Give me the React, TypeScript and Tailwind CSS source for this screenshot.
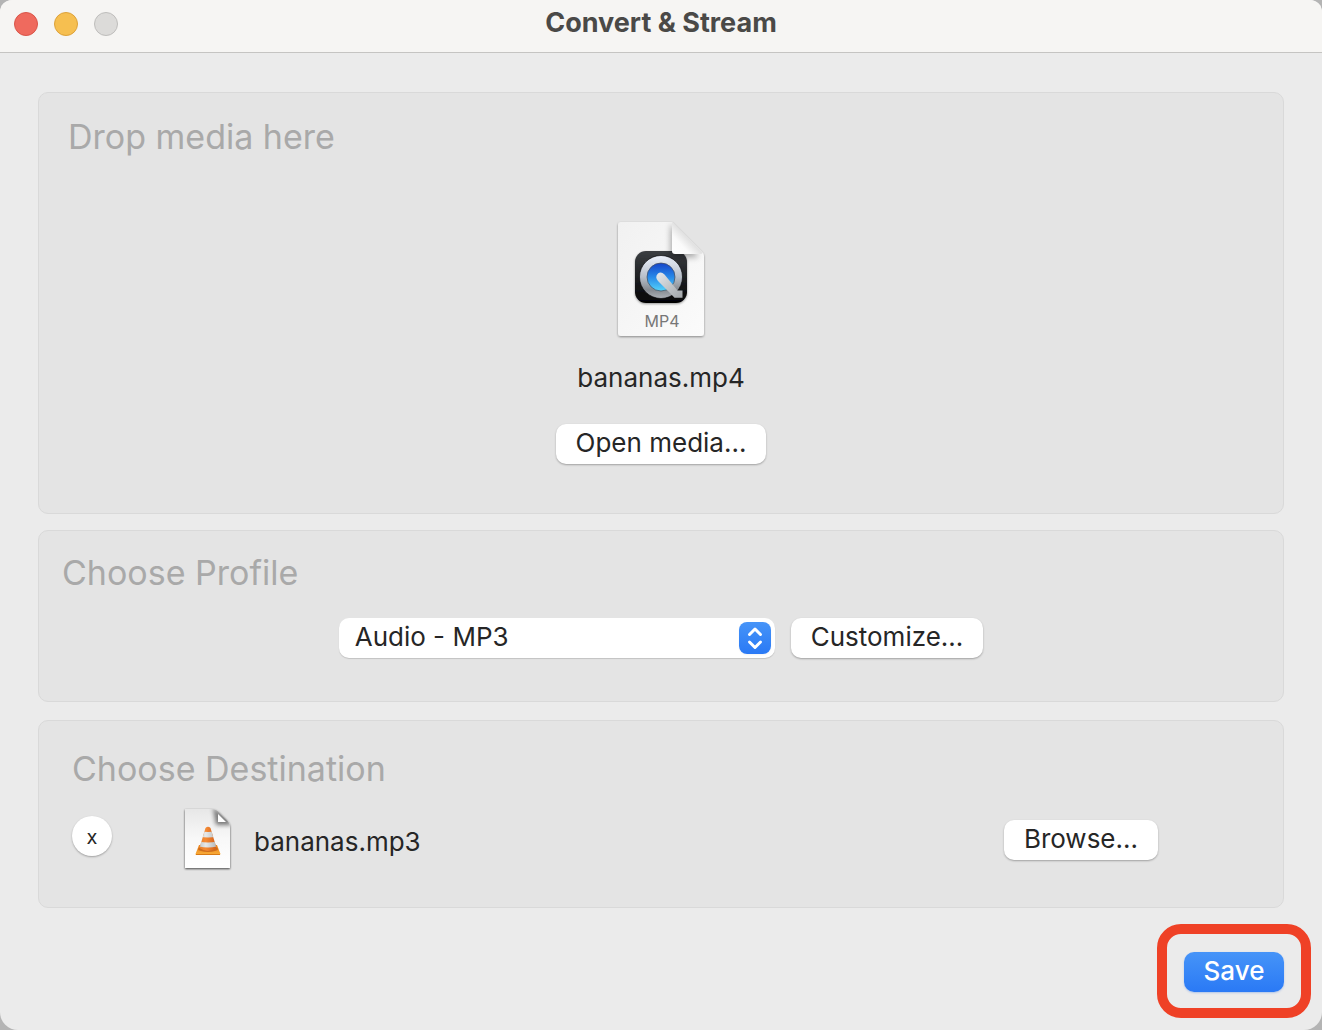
import type { ButtonHTMLAttributes, ReactNode } from "react";

function PushButton({ className = "", ...props }: ButtonHTMLAttributes<HTMLButtonElement>) {
  return (
    <button
      type="button"
      className={`h-10 shrink-0 rounded-[10px] bg-white px-5 pb-0.5 text-[26px] leading-9 whitespace-nowrap text-[#262626] shadow-[0_1px_2px_rgba(0,0,0,0.3)] ${className}`}
      {...props}
    />
  );
}

function Panel({ className = "", children }: { className?: string; children: ReactNode }) {
  return (
    <section className={`rounded-[10px] border border-[#d9d9d9] bg-[#e4e4e4] ${className}`}>
      {children}
    </section>
  );
}

function PanelTitle({ children }: { children: ReactNode }) {
  return <h2 className="text-[34px] leading-11 text-[#a9a9a9]">{children}</h2>;
}

function Mp4FileIcon() {
  return (
    <svg width="96" height="124" viewBox="0 0 96 124" role="img" aria-label="MP4 file">
      <defs>
        <linearGradient id="mp4Page" x1="0" y1="0" x2="1" y2="1">
          <stop offset="0" stopColor="#f1f1f1" />
          <stop offset="1" stopColor="#fbfbfb" />
        </linearGradient>
        <linearGradient id="mp4Fold" x1="0" y1="1" x2="1" y2="0">
          <stop offset="0" stopColor="#ffffff" />
          <stop offset="0.3" stopColor="#fafafa" />
          <stop offset="0.5" stopColor="#e2e2e2" />
        </linearGradient>
        <linearGradient id="qtTile" x1="0" y1="0" x2="0" y2="1">
          <stop offset="0" stopColor="#3b3e42" />
          <stop offset="1" stopColor="#030304" />
        </linearGradient>
        <linearGradient id="qtRing" x1="0" y1="0" x2="0" y2="1">
          <stop offset="0" stopColor="#edf2fc" />
          <stop offset="0.5" stopColor="#b8bfc9" />
          <stop offset="0.8" stopColor="#858a90" />
          <stop offset="1" stopColor="#aeb2b6" />
        </linearGradient>
        <linearGradient id="qtBlue" x1="0" y1="0" x2="0" y2="1">
          <stop offset="0" stopColor="#1544c9" />
          <stop offset="0.5" stopColor="#2788e8" />
          <stop offset="1" stopColor="#56d4fa" />
        </linearGradient>
        <linearGradient id="qtHand" x1="0" y1="0" x2="1" y2="1">
          <stop offset="0" stopColor="#e5e9ed" />
          <stop offset="1" stopColor="#a2a6a9" />
        </linearGradient>
        <clipPath id="mp4Clip">
          <path d="M8 4H59L91 36V115Q91 118 88 118H8Q5 118 5 115V7Q5 4 8 4Z" />
        </clipPath>
        <filter id="mp4Shadow" x="-20%" y="-20%" width="140%" height="140%">
          <feDropShadow dx="0" dy="1" stdDeviation="1" floodOpacity="0.4" />
        </filter>
        <filter id="foldShadow" x="-50%" y="-50%" width="200%" height="200%">
          <feGaussianBlur stdDeviation="3" />
        </filter>
      </defs>
      <path
        d="M8 4H59L89 34Q91 36 91 38V115Q91 118 88 118H8Q5 118 5 115V7Q5 4 8 4Z"
        fill="url(#mp4Page)"
        filter="url(#mp4Shadow)"
      />
      <rect x="22" y="33" width="52" height="52" rx="11" fill="url(#qtTile)" filter="url(#mp4Shadow)" />
      <circle cx="48" cy="59" r="21.5" fill="url(#qtRing)" stroke="#08090b" strokeWidth="0.7" />
      <circle cx="48" cy="59" r="14" fill="url(#qtBlue)" stroke="#454c58" strokeWidth="0.7" />
      <path
        d="M45 55.500Q41.500 59 45 63L57.500 75.500L61.500 79.800H69.500V72.500H64.500L51.500 56.500Q48 53 45 55.500Z"
        fill="url(#qtHand)"
      />
      <g clipPath="url(#mp4Clip)">
        <path d="M58 6V39H86L60 8Z" fill="#000000" opacity="0.35" filter="url(#foldShadow)" />
      </g>
      <path d="M59 4L89 34Q90 36 87 36H62Q59 36 59 33Z" fill="url(#mp4Fold)" />
      <text
        x="49"
        y="109"
        textAnchor="middle"
        fontFamily="Inter, sans-serif"
        fontSize="16"
        fill="#777777"
      >
        MP4
      </text>
    </svg>
  );
}

function VlcFileIcon() {
  return (
    <svg width="52" height="66" viewBox="0 0 52 66" role="img" aria-label="VLC file">
      <defs>
        <linearGradient id="vlcPage" x1="0" y1="0" x2="0" y2="1">
          <stop offset="0" stopColor="#e7e7e7" />
          <stop offset="0.5" stopColor="#f8f8f8" />
          <stop offset="1" stopColor="#ffffff" />
        </linearGradient>
        <linearGradient id="coneOrange" x1="0" y1="0" x2="1" y2="0">
          <stop offset="0" stopColor="#e27b26" />
          <stop offset="0.4" stopColor="#f58b35" />
          <stop offset="1" stopColor="#c95413" />
        </linearGradient>
        <linearGradient id="coneWhite" x1="0" y1="0" x2="1" y2="0">
          <stop offset="0" stopColor="#b8bcbd" />
          <stop offset="0.4" stopColor="#e7e9e9" />
          <stop offset="1" stopColor="#a8acad" />
        </linearGradient>
        <linearGradient id="coneBase" x1="0" y1="0" x2="0" y2="1">
          <stop offset="0" stopColor="#ec821f" />
          <stop offset="1" stopColor="#f8ad38" />
        </linearGradient>
        <filter id="vlcShadow" x="-20%" y="-20%" width="140%" height="140%">
          <feDropShadow dx="0" dy="1" stdDeviation="0.8" floodOpacity="0.7" />
        </filter>
        <filter id="vlcFoldShadow" x="-50%" y="-50%" width="200%" height="200%">
          <feGaussianBlur stdDeviation="2" />
        </filter>
        <clipPath id="vlcClip">
          <path d="M3 3H29Q34 3 37 6L45 14Q48 17 48 22V62H3Z" />
        </clipPath>
        <clipPath id="coneClip">
          <path d="M23.500 22Q26 19.500 28.500 22L34.500 42Q26 48 17.500 42Z" />
        </clipPath>
      </defs>
      <path d="M3 3H29Q34 3 37 6L45 14Q48 17 48 22V62H3Z" fill="url(#vlcPage)" filter="url(#vlcShadow)" />
      <g clipPath="url(#vlcClip)">
        <path d="M31 1L34 19H50L48 15Z" fill="#000000" opacity="0.5" filter="url(#vlcFoldShadow)" />
      </g>
      <path d="M36 8L44 16H36Z" fill="#ffffff" />
      <path d="M17 39H35L38.500 48Q38 49 37 49H15Q13 49 13.500 48Z" fill="url(#coneBase)" />
      <path d="M14 48.500H38" stroke="#d87915" strokeWidth="1" />
      <ellipse cx="26" cy="43" rx="10" ry="3" fill="#b64e12" opacity="0.6" />
      <g clipPath="url(#coneClip)">
        <rect x="15" y="19" width="22" height="28" fill="url(#coneOrange)" />
        <path d="M15 25Q26 27 37 25V30Q26 33 15 30Z" fill="url(#coneWhite)" />
        <path d="M15 35Q26 38 37 35V40Q26 43 15 40Z" fill="url(#coneWhite)" />
      </g>
    </svg>
  );
}

export default function App() {
  return (
    <div className="min-h-screen bg-[#b4b4b4] font-['Inter',sans-serif] text-[#262626]">
      <div className="flex min-h-screen flex-col overflow-hidden rounded-t-[12px] rounded-b-[18px] bg-[#ebebeb]">
        <header className="grid h-[53px] grid-cols-[1fr_auto_1fr] items-center border-b border-[#c5c4c2] bg-[#f6f5f3] px-3.5 pb-1">
          <div className="flex gap-4">
            <button type="button" aria-label="Close" className="size-6 rounded-full border border-[#d95549] bg-[#ef6a5e]" />
            <button type="button" aria-label="Minimize" className="size-6 rounded-full border border-[#dca13a] bg-[#f6bf50]" />
            <button type="button" aria-label="Zoom" disabled className="size-6 rounded-full border border-[#bebdbb] bg-[#dcdbd9]" />
          </div>
          <h1 className="pb-0.5 text-[27px] leading-8 font-bold text-[#4a4947]">Convert &amp; Stream</h1>
        </header>

        <main className="flex flex-col px-[38px] pt-[39px]">
          <Panel className="px-[29px] pt-[22px] pb-[49px]">
            <PanelTitle>Drop media here</PanelTitle>
            <div className="flex flex-col items-center pt-[59px]">
              <Mp4FileIcon />
              <p className="mt-[18px] text-[26px] leading-9">bananas.mp4</p>
              <PushButton className="mt-7">Open media...</PushButton>
            </div>
          </Panel>

          <Panel className="mt-4 px-[23px] pt-5 pb-[43px]">
            <PanelTitle>Choose Profile</PanelTitle>
            <div className="mt-[23px] flex justify-center gap-4">
              <div className="relative w-[436px]">
                <select
                  aria-label="Profile"
                  className="h-10 w-full appearance-none rounded-[10px] bg-white pr-12 pb-0.5 pl-4 text-[26px] leading-9 shadow-[0_1px_1px_rgba(0,0,0,0.15)]"
                >
                  <option>Audio - MP3</option>
                </select>
                <span className="pointer-events-none absolute top-1 right-1 flex size-8 items-center justify-center rounded-lg bg-linear-to-b from-[#4694f8] to-[#2a79f5] shadow-xs">
                  <svg width="32" height="32" viewBox="0 0 32 32" fill="none" stroke="#ffffff" strokeWidth="3" strokeLinecap="round" strokeLinejoin="round">
                    <path d="M10.500 12.500L16 7L21.500 12.500M10.500 20L16 25.500L21.500 20" />
                  </svg>
                </span>
              </div>
              <PushButton>Customize...</PushButton>
            </div>
          </Panel>

          <Panel className="mt-[18px] pt-[26px] pr-[125px] pb-[35px] pl-[33px]">
            <PanelTitle>Choose Destination</PanelTitle>
            <div className="mt-[15px] flex items-center">
              <button
                type="button"
                aria-label="Remove destination"
                className="mb-1.5 size-10 rounded-full bg-white pt-0.5 text-xl shadow-[0_1px_2px_rgba(0,0,0,0.3)]"
              >
                x
              </button>
              <span className="ml-[70px]">
                <VlcFileIcon />
              </span>
              <p className="ml-5 pt-1.5 text-[26px] leading-9">bananas.mp3</p>
              <PushButton className="mt-0.5 ml-auto">Browse...</PushButton>
            </div>
          </Panel>
        </main>

        <footer className="flex justify-end pt-4 pr-[11px] pb-3">
          <div className="rounded-[24px] border-10 border-[#ef4126] px-[17px] pt-[18px] pb-4">
            <button
              type="button"
              className="block h-10 w-[100px] rounded-[10px] bg-linear-to-b from-[#4694f8] to-[#2a79f5] pb-0.5 text-[26px] leading-9 font-medium text-white shadow-[0_1px_2px_rgba(40,110,230,0.3)]"
            >
              Save
            </button>
          </div>
        </footer>
      </div>
    </div>
  );
}
